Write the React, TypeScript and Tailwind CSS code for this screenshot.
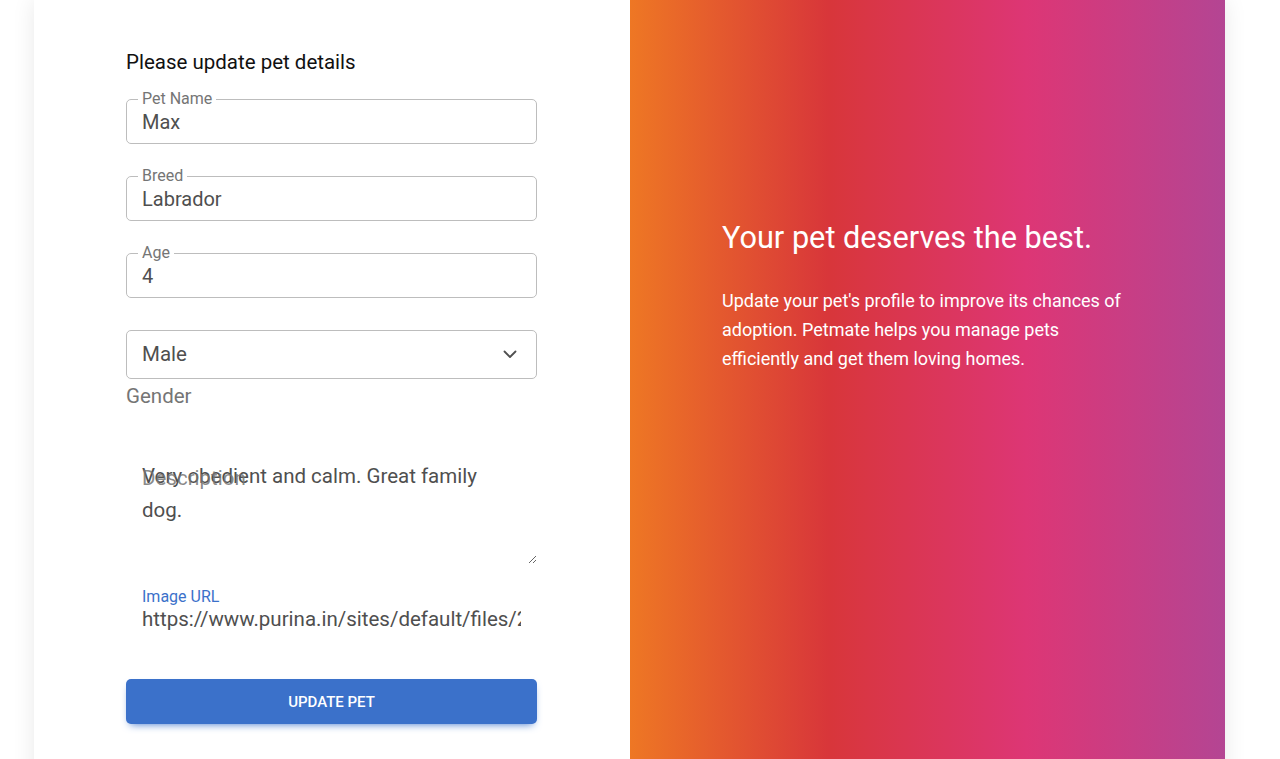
import React from "react";

function OutlinedField({ label, value }: { label: string; value: string }) {
  return (
    <fieldset className="rounded-[5px] border border-[#bdbdbd] pb-[6px] pl-[11px] pr-[11px]">
      <legend className="px-[4px] text-[16px] leading-[16px] text-[#757575]">{label}</legend>
      <input
        readOnly
        value={value}
        className="h-[30px] w-full bg-transparent pl-[4px] text-[20px] text-[#4f4f4f] outline-none"
      />
    </fieldset>
  );
}

export default function App() {
  return (
    <div className="min-h-screen overflow-hidden bg-white font-['Roboto',sans-serif]">
      <div className="ml-[34px] flex h-[800px] w-[1191px] bg-white shadow-[0_0_22px_rgba(0,0,0,0.09)]">
        {/* Form column */}
        <div className="w-[596px] pl-[92px] pr-[93px] pt-[50px]">
          <p className="mb-[16px] text-[20.5px] leading-[25px] text-[#111]">Please update pet details</p>

          <div className="flex flex-col gap-[24px]">
            <OutlinedField label="Pet Name" value="Max" />
            <OutlinedField label="Breed" value="Labrador" />
            <OutlinedField label="Age" value="4" />
          </div>

          {/* Gender select */}
          <div className="mt-[32px] flex h-[49px] items-center justify-between rounded-[5px] border border-[#bdbdbd] pl-[15px] pr-[19px]">
            <span className="text-[20.5px] text-[#4f4f4f]">Male</span>
            <svg width="14" height="9" viewBox="0 0 14 9" fill="none">
              <path d="M1.5 1.5l5.5 5.5 5.5-5.5" stroke="#4f4f4f" strokeWidth="1.8" strokeLinecap="round" strokeLinejoin="round" />
            </svg>
          </div>
          <div className="mt-[5px] text-[20.5px] leading-[24px] text-[#757575]">Gender</div>

          {/* Description */}
          <div className="relative mt-[34px]">
            <textarea
              readOnly
              value="Very obedient and calm. Great family dog."
              className="block h-[122px] w-full resize-y bg-transparent pl-[16px] pr-[22px] pt-[17px] text-[20.5px] leading-[34px] text-[#4f4f4f] outline-none"
            />
            <span className="pointer-events-none absolute left-[16px] top-[24px] text-[20.5px] leading-[24px] text-[#757575]/85">
              Description
            </span>
          </div>

          {/* Image URL */}
          <div className="mt-[23px]">
            <div className="pl-[16px] text-[16px] leading-[20px] text-[#3b71ca]">Image URL</div>
            <input
              readOnly
              value="https://www.purina.in/sites/default/files/2020-11/Labrador-Retriever.jpg"
              className="block h-[24px] w-full bg-transparent px-[16px] text-[20.5px] text-[#4f4f4f] outline-none"
            />
          </div>

          <button className="mt-[48px] h-[45px] w-full rounded-[5px] bg-[#3b71ca] pt-[2px] text-[15px] font-medium uppercase text-white shadow-[0_4px_9px_-4px_#3b71ca]">
            Update Pet
          </button>
        </div>

        {/* Gradient column */}
        <div className="w-[595px] bg-[linear-gradient(to_right,#ee7724,#d8363a,#dd3675,#b44593)] px-[92px] pt-[220px] text-white">
          <h4 className="text-[30.7px] leading-[36px]">Your pet deserves the best.</h4>
          <p className="mt-[30px] text-[18px] leading-[29px]">
            Update your pet's profile to improve its chances of adoption. Petmate helps you manage pets
            efficiently and get them loving homes.
          </p>
        </div>
      </div>
    </div>
  );
}
